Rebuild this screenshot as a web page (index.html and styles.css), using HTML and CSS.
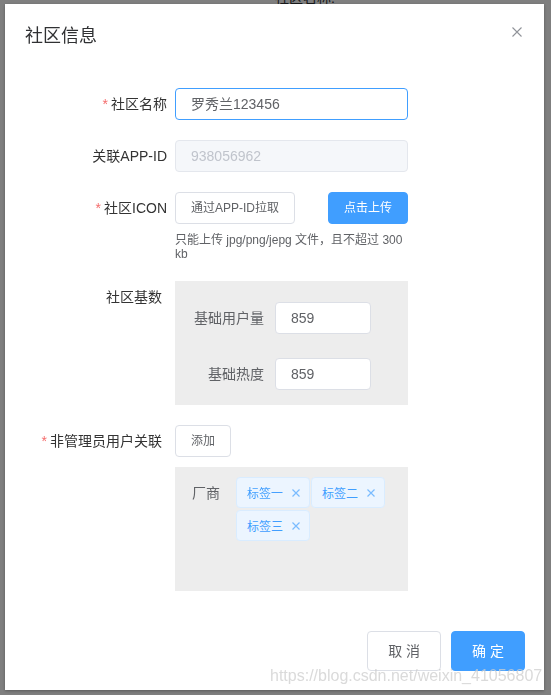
FILE: index.html
```html
<!DOCTYPE html>
<html lang="zh-CN">
<head>
<meta charset="utf-8">
<title>社区信息</title>
<link rel="stylesheet" href="styles.css">
</head>
<body>
<div class="page">
  <div class="page-top">社区名称:</div>
</div>
<div class="mask"></div>
<div class="wrapper">
  <div class="dialog">
    <div class="dialog-header">
      <span class="dialog-title">社区信息</span>
      <span class="dialog-close">
        <svg width="10" height="10" viewBox="0 0 10 10"><path d="M0.5 0.5 L9.5 9.5 M9.5 0.5 L0.5 9.5" stroke="#909399" stroke-width="1.1" fill="none"/></svg>
      </span>
    </div>
    <div class="dialog-body">
      <div class="form-item">
        <label class="label"><span class="req">*</span>社区名称</label>
        <div class="content">
          <div class="input input--focus">罗秀兰123456</div>
        </div>
      </div>
      <div class="form-item">
        <label class="label">关联APP-ID</label>
        <div class="content">
          <div class="input input--disabled">938056962</div>
        </div>
      </div>
      <div class="form-item">
        <label class="label"><span class="req">*</span>社区ICON</label>
        <div class="content">
          <div class="upload-row">
            <button class="btn btn--small">通过APP-ID拉取</button>
            <button class="btn btn--small btn--primary">点击上传</button>
          </div>
          <div class="tip">只能上传 jpg/png/jepg 文件，且不超过 300 kb</div>
        </div>
      </div>
      <div class="form-item">
        <label class="label label--narrow">社区基数</label>
        <div class="content">
          <div class="grey-box base-box">
            <div class="sub-item">
              <label class="sub-label">基础用户量</label>
              <div class="input input--small">859</div>
            </div>
            <div class="sub-item">
              <label class="sub-label">基础热度</label>
              <div class="input input--small">859</div>
            </div>
          </div>
        </div>
      </div>
      <div class="form-item">
        <label class="label label--narrow"><span class="req">*</span>非管理员用户关联</label>
        <div class="content">
          <button class="btn btn--small">添加</button>
          <div class="grey-box tag-box">
            <span class="tag-label">厂商</span>
            <div class="tags">
              <span class="tag">标签一<span class="tag-close"><svg width="8" height="8" viewBox="0 0 8 8"><path d="M0.5 0.5 L7.5 7.5 M7.5 0.5 L0.5 7.5" stroke="#79bbff" stroke-width="1.2" fill="none"/></svg></span></span>
              <span class="tag">标签二<span class="tag-close"><svg width="8" height="8" viewBox="0 0 8 8"><path d="M0.5 0.5 L7.5 7.5 M7.5 0.5 L0.5 7.5" stroke="#79bbff" stroke-width="1.2" fill="none"/></svg></span></span>
              <span class="tag">标签三<span class="tag-close"><svg width="8" height="8" viewBox="0 0 8 8"><path d="M0.5 0.5 L7.5 7.5 M7.5 0.5 L0.5 7.5" stroke="#79bbff" stroke-width="1.2" fill="none"/></svg></span></span>
            </div>
          </div>
        </div>
      </div>
    </div>
    <div class="dialog-footer">
      <button class="btn">取 消</button>
      <button class="btn btn--primary">确 定</button>
    </div>
  </div>
</div>
<div class="watermark">https://blog.csdn.net/weixin_41056807</div>
</body>
</html>
```
FILE: styles.css
```css
* { box-sizing: border-box; }
html, body { margin: 0; padding: 0; }
body {
  width: 551px;
  height: 695px;
  overflow: hidden;
  position: relative;
  background: #fff;
  font-family: "Liberation Sans", "Noto Sans CJK SC", sans-serif;
  font-size: 14px;
  color: #606266;
}
.page { display: flow-root; }
.page-top {
  margin: -10px 0 0 275px;
  font-size: 14px;
  line-height: 16px;
  color: #303133;
}
.mask {
  position: fixed;
  top: 0; left: 0; right: 0; bottom: 0;
  background: rgba(0, 0, 0, 0.5);
}
.wrapper {
  position: fixed;
  top: 0; left: 0; right: 0; bottom: 0;
  padding: 4px 0 0 5px;
}
.dialog {
  width: 539px;
  background: #fff;
  box-shadow: 0 1px 3px rgba(0, 0, 0, 0.3);
}
.dialog-header {
  display: flex;
  justify-content: space-between;
  align-items: flex-start;
  padding: 20px 22px 10px 20px;
}
.dialog-title {
  font-size: 18px;
  line-height: 24px;
  color: #303133;
}
.dialog-close {
  display: flex;
  margin-top: 3px;
}
.dialog-body { padding: 30px 20px; }
.form-item { display: flex; margin-bottom: 20px; }
.form-item:last-child { margin-bottom: 0; }
.label {
  width: 150px;
  flex: none;
  text-align: right;
  padding-right: 8px;
  line-height: 32px;
  font-size: 14px;
  color: #333;
}
.label--narrow { padding-right: 13px; }
.req { color: #f56c6c; margin-right: 3px; }
.content { width: 233px; flex: none; }
.input {
  height: 32px;
  line-height: 30px;
  border: 1px solid #dcdfe6;
  border-radius: 4px;
  padding: 0 15px;
  font-size: 14px;
  color: #606266;
  background: #fff;
}
.input--focus { border-color: #409eff; }
.input--disabled { background: #f5f7fa; border-color: #e4e7ed; color: #c0c4cc; }
.input--small { width: 96px; }
.upload-row { display: flex; justify-content: space-between; }
.btn {
  height: 40px;
  padding: 0 20px;
  border: 1px solid #dcdfe6;
  border-radius: 4px;
  background: #fff;
  color: #606266;
  font-family: inherit;
  font-size: 14px;
  line-height: 38px;
  white-space: nowrap;
}
.btn--small { height: 32px; line-height: 30px; padding: 0 15px; font-size: 12px; }
.btn--primary { background: #409eff; border-color: #409eff; color: #fff; }
.tip {
  margin-top: 9px;
  font-size: 12px;
  line-height: 14px;
  color: #606266;
}
.grey-box { background: #ededed; }
.base-box { padding: 21px 0 15px; display: flex; flex-direction: column; gap: 24px; }
.sub-item { display: flex; }
.sub-label {
  width: 100px;
  text-align: right;
  padding-right: 11px;
  line-height: 32px;
  font-size: 14px;
  color: #606266;
}
.tag-box {
  margin-top: 10px;
  height: 124px;
  display: flex;
  align-items: flex-start;
  padding: 10px 0 0 17px;
}
.tag-label {
  width: 28px;
  margin-right: 16px;
  line-height: 32px;
  font-size: 14px;
  color: #606266;
  flex: none;
}
.tags { display: flex; flex-wrap: wrap; gap: 2px 1px; flex: 1; }
.tag {
  display: inline-flex;
  align-items: center;
  height: 31px;
  padding: 0 5px 0 10px;
  border: 1px solid #d9ecff;
  border-radius: 4px;
  background: #ecf5ff;
  color: #409eff;
  font-size: 12px;
}
.tag-close {
  width: 16px;
  height: 16px;
  margin-left: 5px;
  display: flex;
  align-items: center;
  justify-content: center;
}
.dialog-footer {
  display: flex;
  justify-content: flex-end;
  gap: 10px;
  padding: 10px 19px 19px 20px;
}
.watermark {
  position: absolute;
  left: 270px;
  top: 667px;
  font-family: "Liberation Sans", sans-serif;
  font-size: 16px;
  line-height: 18px;
  color: rgba(205, 205, 205, 0.75);
  white-space: nowrap;
}
```
